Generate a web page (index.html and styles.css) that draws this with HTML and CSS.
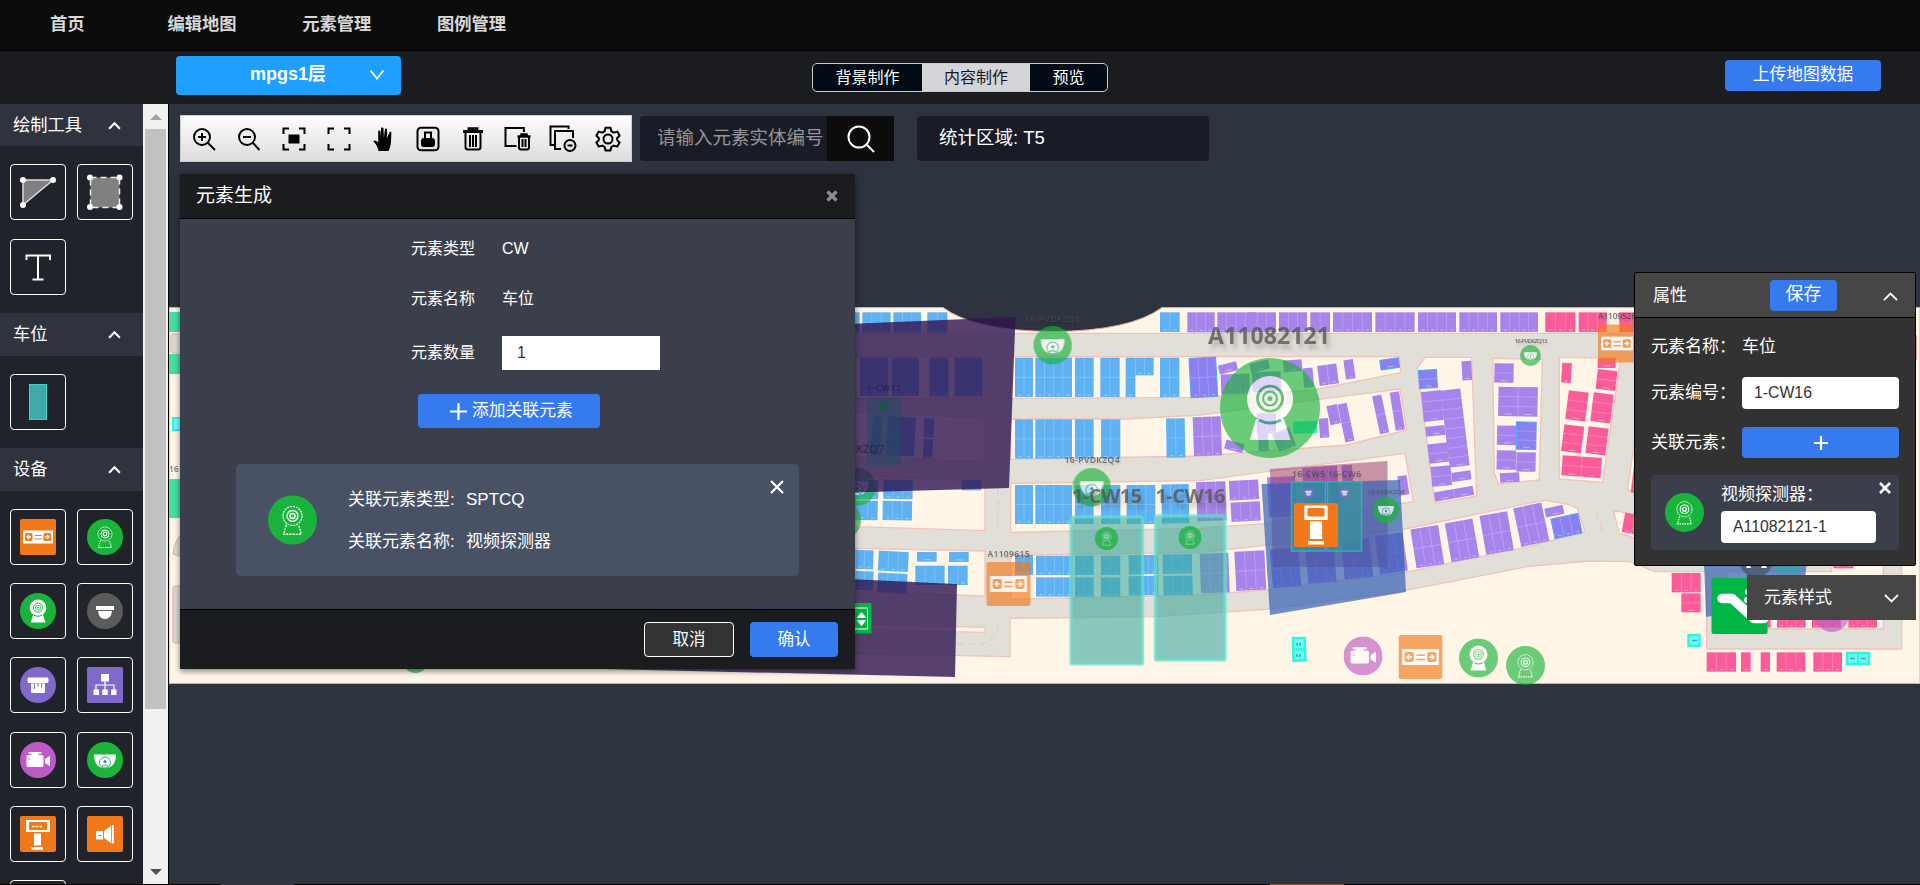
FILE: index.html
```html
<!DOCTYPE html>
<html lang="zh-CN">
<head>
<meta charset="utf-8">
<title>编辑地图</title>
<link rel="stylesheet" href="styles.css">
</head>
<body>
<svg class="defs" width="0" height="0">
  <defs>
    <symbol id="guide" viewBox="0 0 36 36"><rect width="36" height="36" rx="2" fill="#f1791b"/><rect x="3" y="11.500" width="30" height="13" fill="#fff"/><rect x="5" y="14" width="7.500" height="8" rx="1.500" fill="#f1791b"/><rect x="23.500" y="14" width="7.500" height="8" rx="1.500" fill="#f1791b"/><path d="M14.700 16.500h7M14.700 20h7" stroke="#f1791b" stroke-width="1.200"/><path d="M11 18H7m2-2-2 2 2 2M25 18h4m-2-2 2 2-2 2" fill="none" stroke="#fff" stroke-width="1.300"/></symbol>
    <symbol id="probe" viewBox="0 0 36 36"><circle cx="18" cy="18" r="18" fill="#1ab43c"/><g fill="none" stroke="#fff"><circle cx="18" cy="15" r="7" stroke-dasharray="1.500 .7" stroke-width=".9"/><circle cx="18" cy="15" r="4"/><circle cx="18" cy="15" r="1.800" stroke-width="1.200"/><path d="M13.500 21.500l-2 7h13l-2-7" stroke-dasharray="1.500 .8" stroke-width="1"/></g></symbol>
    <symbol id="cam" viewBox="0 0 36 36"><circle cx="18" cy="18" r="18" fill="#1ab43c"/><circle cx="18" cy="14.800" r="8.300" fill="#fff"/><path d="M13 22h10l2.400 7.500H10.700z" fill="#fff"/><g fill="none" stroke="#1ab43c"><circle cx="18" cy="14.600" r="4.500"/><circle cx="18" cy="14.600" r="2.500" stroke-width=".8"/><path d="M14 22.300q4 2.200 8 0" stroke="#16a085"/></g><circle cx="18" cy="14.600" r=".9" fill="#1ab43c"/></symbol>
    <symbol id="dome" viewBox="0 0 36 36"><circle cx="18" cy="18" r="18" fill="#5b5b5b"/><path d="M9 13h18v4H9zM11 18h14q-1 8-7 8t-7-8z" fill="#fff"/></symbol>
    <symbol id="sensor" viewBox="0 0 36 36"><circle cx="18" cy="18" r="18" fill="#8069c9"/><path d="M8 10.500h20q1.500 2.500 0 5.500H8q-1.500-3 0-5.500zM11 16.500h14v8q0 1.500-1.500 1.500h-11q-1.500 0-1.500-1.500z" fill="#fff"/><path d="M14.500 17v5M18 17v3M21.500 17v3.500" stroke="#8069c9"/></symbol>
    <symbol id="net" viewBox="0 0 36 36"><rect width="36" height="36" rx="1.500" fill="#8069c9"/><path d="M14 7h8v7.500h-8zM6.500 22.500h5.500v5.500H6.500zM15.300 22.500h5.500v5.500h-5.500zM24 22.500h5.500v5.500H24z" fill="#fff"/><path d="M18 14v9M9 23v-5h18v5" fill="none" stroke="#fff" stroke-width="1.200"/></symbol>
    <symbol id="video" viewBox="0 0 36 36"><circle cx="18" cy="18" r="18" fill="#bd5bc5"/><path d="M8.500 10h13v1.700h-3V13H22q1.500 0 1.500 1.500v9q0 1.500-1.500 1.500H8q-1.500 0-1.500-1.500v-9Q6.500 13 8 13h3.500v-1.300h-3zM25 17l5-3.200v10.500L25 21z" fill="#fff"/><path d="M8.500 17h2" stroke="#bd5bc5"/></symbol>
    <symbol id="face" viewBox="0 0 36 36"><circle cx="18" cy="18" r="18" fill="#1ab43c"/><path d="M7 12.500h22q0 13-11 13.700Q7 25.500 7 12.500z" fill="#fff"/><circle cx="18" cy="20.500" r="5.500" fill="none" stroke="#22b573"/><circle cx="18" cy="19.500" r="1.600" fill="#22a07a"/><path d="M14 25q4-4 8 0" fill="none" stroke="#22b573"/></symbol>
    <symbol id="kiosk" viewBox="0 0 36 36"><rect width="36" height="36" rx="2" fill="#f1791b"/><path d="M6 4h24v12H6zM14 17.500h7v12h-7zM11.500 31H23v2.800H11.500z" fill="#fff"/><rect x="9" y="6" width="18" height="8" rx="1" fill="#f1791b"/><path d="M12 10.500h2.500m1.200 0h2.500m1.200 0H22" stroke="#fff" stroke-width="1.300"/></symbol>
    <symbol id="totem" viewBox="0 0 36 36"><rect width="36" height="36" rx="1.500" fill="#f1791b"/><rect x="8.500" y="2" width="19" height="12" rx="1" fill="#fff"/><rect x="11" y="4" width="14" height="7" rx="1" fill="#f1791b"/><path d="M13 15h10v14.500H13zM11.500 31h13v3h-13z" fill="#fff"/></symbol>
    <symbol id="horn" viewBox="0 0 36 36"><rect width="36" height="36" rx="2" fill="#f1791b"/><path d="M9 15h7v8.500H9zM17 15l7-5v17l-7-5zM24.800 9h2v18.500h-2z" fill="#fff"/><path d="M11 19.500h3" stroke="#f1791b"/></symbol>
  </defs>
</svg>
<div class="app">
  <nav class="nav"><a>首页</a><a>编辑地图</a><a>元素管理</a><a>图例管理</a></nav>
  <header class="bar">
    <button class="floor"><span>mpgs1层</span><svg width="16" height="12" viewBox="0 0 16 12"><path d="M1.500 1.500 8 9.500l6.500-8"/></svg></button>
    <div class="tabs"><span>背景制作</span><span class="active">内容制作</span><span>预览</span></div>
    <button class="upload">上传地图数据</button>
  </header>
  <main class="main">
    <aside class="side">
      <h3>绘制工具<svg class="caret" viewBox="0 0 12 8"><path d="M1 7 6 2l5 5"/></svg></h3>
      <div class="tools draw">
        <i><svg width="36" height="36"><path d="M3 6h30L3 31z" fill="#808080" stroke="#ddd" stroke-width="1.500"/><g fill="#fff"><circle cx="3" cy="6" r="3"/><circle cx="33" cy="6" r="3"/><circle cx="3" cy="31" r="3"/></g></svg></i>
        <i><svg width="36" height="36"><rect x="3.500" y="3.500" width="29" height="30" fill="#808080" stroke="#eee" stroke-width="1.500" stroke-dasharray="6 4"/><g fill="#fff"><circle cx="3" cy="3.500" r="3"/><circle cx="32.500" cy="3.500" r="3"/><circle cx="3" cy="33" r="3"/><circle cx="32.500" cy="33" r="3"/></g></svg></i>
        <i><svg width="36" height="36"><path d="M6.500 11V6.500h23.500V11M18 6.500v24M12.500 30.500h11" fill="none" stroke="#fff" stroke-width="2"/></svg></i>
      </div>
      <h3>车位<svg class="caret" viewBox="0 0 12 8"><path d="M1 7 6 2l5 5"/></svg></h3>
      <div class="tools"><i><b class="stall"></b></i></div>
      <h3>设备<svg class="caret" viewBox="0 0 12 8"><path d="M1 7 6 2l5 5"/></svg></h3>
      <div class="tools">
        <i><svg width="36" height="36"><use href="#guide"/></svg></i><i><svg width="36" height="36"><use href="#probe"/></svg></i>
        <i><svg width="36" height="36"><use href="#cam"/></svg></i><i><svg width="36" height="36"><use href="#dome"/></svg></i>
        <i><svg width="36" height="36"><use href="#sensor"/></svg></i><i><svg width="36" height="36"><use href="#net"/></svg></i>
        <i><svg width="36" height="36"><use href="#video"/></svg></i><i><svg width="36" height="36"><use href="#face"/></svg></i>
        <i><svg width="36" height="36"><use href="#kiosk"/></svg></i><i><svg width="36" height="36"><use href="#horn"/></svg></i>
        <i></i>
      </div>
    </aside>
    <div class="scroll"><b class="up"></b><b class="thumb"></b><b class="down"></b></div>
    <section class="stage">
      <svg class="map" id="map" viewBox="169 104 1751 780" width="1751" height="780">
        <path d="M169 307.500H943Q975 331 1053 331.500Q1130 331 1162 307.500H1920V683.500H169z" fill="#fff6e8" stroke="#d9a8a2"/>
        <g transform="translate(840 290) scale(.33333)" fill="#fff6e8" stroke="#f2c2ba" stroke-width="4" stroke-linejoin="round">
          <path fill="#e2dfd8" d="M45 130H3185V1077H2600V845H2445L2370 815 2250 813 2060 830 1680 905 1280 958 950 980 510 985V1100L-100 1088-100 130z"/>
          <path d="M45 200H437V325H45zM45 365 437 385V515L45 503zM45 555 435 575V722L45 710zM45 775 435 783V918L45 905zM45 1003 435 1012V1027L45 1018z"/>
          <path d="M512 200H1678L1682 248 1420 300 1080 322 512 325zM512 387 860 387 1080 375 1460 325 1680 297 1700 420 1520 465 1080 498 512 508zM512 580 1080 572 1280 545 1695 490 1720 635 1280 700 1080 715 512 727zM512 795 1080 788 1680 720 2115 630 2180 642 2212 655 2235 725 2065 770 1680 850 1280 900 1080 915 512 928z"/>
          <path d="M1732 235 1755 202H1895L1910 618 1786 640zM1958 205 2107 208 2098 570 1975 582 1963 550zM2158 202 2342 205 2288 577 2158 567zM2385 450 2362 600 2400 610V450zM2320 660 2400 680V750L2338 730z"/>
          <path fill="none" stroke-dasharray="22 12" stroke-width="3" d="M474 390V725M45 1048 400 1062Q474 1063 474 1005M2268 670 2288 730"/>
          <path d="M2660 845H2975V800H3130V1017H2660z"/>
          <path d="M3228 135v75" fill="none" stroke-width="6" stroke="#f4a09a"/>
        </g>
        <g id="stalls" transform="translate(840 290) scale(.33333)"></g>
        <g>
          <rect x="169" y="312" width="12" height="20" fill="#43dfa5"/><rect x="171" y="334" width="12" height="19" rx="2" fill="#dcd8d2" stroke="#e9aaa3"/><rect x="169" y="354" width="12" height="20" fill="#43dfa5"/><rect x="173" y="418" width="10" height="12" fill="#6ff" stroke="#2ff5df" stroke-width="2"/><rect x="169" y="479" width="12" height="39" fill="#43dfa5"/><rect x="173" y="586" width="12" height="57" rx="2" fill="#dcd8d2" stroke="#e9aaa3"/><path d="M184 532q-10 8-11 22l11 4" fill="#dcd8d2" stroke="#e9aaa3"/><circle cx="415.500" cy="660" r="13" fill="#1ab43c" opacity=".65"/>
          <text x="169" y="472" class="tag">16</text>
        </g>
        <g opacity=".65"><use href="#face" x="838" y="462" width="38" height="50"/><circle cx="841" cy="520" r="20" fill="#1ab43c"/></g>
        <path d="M800 326 1015.500 317 1009 488 800 494z" fill="#2f1450" opacity=".8"/>
        <path d="M760 575 957 584 955 677 560 668z" fill="#2f1450" opacity=".8"/>
        <rect x="867" y="397" width="34" height="68" fill="#274766" opacity=".6"/><circle cx="884" cy="406" r="5" fill="#1b5350"/>
        <text x="884" y="391" class="tag dim" text-anchor="middle" textLength="34">1-CW12</text><text x="856" y="453" class="tag dim kz">KZQ7</text>
        <path d="M824 603h47.500v30.500H824z" fill="#00b646"/><path d="M838 608h29.500v21H838M861.500 612.500l4 5h-8zM861.500 625.500l4-5h-8z" fill="none" stroke="#fff"/><path d="M861.500 612.500l4 5h-8zM861.500 625.500l4-5h-8z" fill="#fff"/>
        <g opacity=".65">
          <use href="#face" x="1033.500" y="326" width="38.500" height="38.500"/><use href="#face" x="1072.500" y="468" width="38.500" height="38.500"/>
          <use href="#face" x="1520" y="345" width="21" height="21"/>
          <use href="#cam" x="1220" y="358" width="100" height="100"/>
          <use href="#guide" x="986.500" y="562" width="44" height="44"/><use href="#guide" x="1598" y="324" width="38" height="39"/>
          <use href="#video" x="1343.500" y="636.500" width="39" height="39"/><use href="#guide" x="1398.500" y="635" width="44" height="44"/>
          <use href="#cam" x="1459" y="638.500" width="39" height="39"/><use href="#probe" x="1506" y="646" width="39" height="39"/>
          <circle cx="1832" cy="615" r="17" fill="#bd5bc5"/>
        </g>
        <path d="M1270 469 1387.500 461V567H1273z" fill="#9a3a6a" opacity=".52"/>
        <path d="M1261.500 484 1400 480 1406 592 1270 615z" fill="#355fb5" opacity=".7"/>
        <g fill="#2f9c98" fill-opacity=".6" stroke="#31aeb9" stroke-width="1.500"><rect x="1291.500" y="482" width="34" height="69"/><rect x="1327.500" y="482" width="34" height="69"/></g>
        <g opacity=".75"><use href="#sensor" x="1303" y="487.500" width="11" height="11"/><use href="#sensor" x="1339" y="487.500" width="11" height="11"/><use href="#face" x="1373" y="497" width="26" height="26"/></g>
        <use href="#totem" x="1294" y="503" width="44" height="44"/>
        <g fill="#3fa89c" fill-opacity=".6" stroke="#67e0d0" stroke-opacity=".7" stroke-width="3.500"><rect x="1071" y="517" width="71.500" height="147" rx="1.500"/><rect x="1155.500" y="516" width="69.500" height="144" rx="1.500"/></g>
        <g opacity=".75"><use href="#probe" x="1095" y="527" width="23" height="23"/><use href="#probe" x="1178.500" y="526" width="23" height="23"/></g>
        <g fill="#70fff2" stroke="#2ff5df" stroke-width="2.500"><path d="M1293 638h11.500l1 22-12 1zM1293 649.500h12"/><rect x="1688.500" y="635" width="11" height="11"/><rect x="1847" y="653" width="22" height="11"/></g><path d="M1858 653v11" stroke="#2ff5df" stroke-width="2"/>
        <path d="M1297 643v3M1300 643v3M1297 654v3M1300 654v3M1692 640.500h5M1850 658.500h5M1861 658.500h5" stroke="#3aa" stroke-width="1.500"/>
        <path d="M1704 562H1807L1802 600 1706 617z" fill="#355fb5" opacity=".7"/><circle cx="1756" cy="560" r="17" fill="#50617b"/><path d="M1746 568l3-5 2 5zM1761 568l3-5 3 5z" fill="#fff"/><rect x="1776" y="555" width="24" height="19" fill="#439bb2"/>
        <rect x="1711.500" y="578" width="56" height="56" rx="2" fill="#00b646"/><path d="M1722 598.500h10l22 20h10" fill="none" stroke="#fff" stroke-width="9.500" stroke-linecap="round" stroke-linejoin="round"/><circle cx="1748" cy="592" r="3" fill="#fff"/><circle cx="1747" cy="600" r="3" fill="#fff"/>
        <g class="label"><text x="1208" y="344" textLength="122" class="big">A11082121</text><text x="1072" y="503" textLength="70">1-CW15</text><text x="1155.500" y="503" textLength="70">1-CW16</text></g>
        <g class="tag" text-anchor="middle"><text x="1052.500" y="321.500" textLength="55">16-PVDKZQ8</text><text x="1092" y="463" textLength="55">16-PVDKZQ4</text><text x="1008.500" y="557" textLength="42">A1109615</text><text x="1326.500" y="477" textLength="69">16-CW5 16-CW6</text><text x="1386" y="494" textLength="38" class="tiny">16-PVDKZQ9</text><text x="1531" y="343" textLength="33" class="tiny">16-PVDKZQ13</text><text x="1617" y="319" textLength="38">A1109528</text></g>
      </svg>

      <div class="overlay">
        <div class="toprow">
          <div class="toolbar">
            <svg viewBox="0 0 24 24"><circle cx="10" cy="10" r="8"/><path d="M16 16l7 7M10 6v8M6 10h8"/></svg>
            <svg viewBox="0 0 24 24"><circle cx="10" cy="10" r="8"/><path d="M16 16l6.500 7M6 10h8"/></svg>
            <svg viewBox="0 0 24 24"><path d="M1.500 7V1.500H7M17 1.500h5.500V7M22.500 17v5.500H17M7 22.500H1.500V17"/><path d="M7.500 8.500h9v7h-9z" fill="#000"/></svg>
            <svg viewBox="0 0 24 24"><path d="M1.500 7V1.500H7M17 1.500h5.500V7M22.500 17v5.500H17M7 22.500H1.500V17"/></svg>
            <svg viewBox="0 0 24 24"><path d="M6.500 24C6 20 4 17 1.500 14.500c.5-1.800 2.500-1 4.700 1V4.500c0-1.500 2-1.500 2.200 0l.6 6V1.600c0-1.600 2.400-1.600 2.500 0l.4 8.900 1-8c.2-1.500 2.300-1.300 2.200.2L15 11l2.300-5.500c.6-1.300 2.500-.8 2.200.7C18.700 11 20 18 16.500 24z" fill="#000" stroke="none"/></svg>
            <svg viewBox="0 0 24 24"><rect x="1.500" y=".8" width="21" height="22.500" rx="3.500"/><rect x="6" y="12" width="12" height="7" rx="2" fill="#000"/><path d="M9 12V5.500h6V12"/></svg>
            <svg viewBox="0 0 24 24"><path d="M2 4.500h20M8 4V1.800h8V4" stroke-width="3"/><path d="M4.500 6v14q0 2.500 2.500 2.500h10q2.500 0 2.500-2.500V6M9 8v12M12 8v12M15 8v12"/></svg>
            <svg viewBox="0 0 24 24"><path d="M10.500 19H-.5V.9h18.400V5"/><path d="M11.500 9.500h13M15.500 9V7.500h5V9" stroke-width="2.500"/><path d="M13 10v10.500q0 2 2 2h6q2 0 2-2V10M16.500 12v8M19.500 12v8" stroke-width="2"/></svg>
            <svg viewBox="0 0 24 24"><path d="M3 18H-.5V-.5h18V2"/><path d="M10 22H4V4h18v7"/><circle cx="19" cy="18.500" r="5.500"/><path d="M16.500 18.500h5"/></svg>
            <svg viewBox="0 0 24 24"><path d="M9.500.8h5l.8 3.400 2.500 1.400 3.500-1 2.300 4.200-2.400 2.200v2.200l2.400 2.200-2.300 4.200-3.500-1-2.500 1.400-.8 3.400h-5l-.8-3.400-2.500-1.400-3.500 1L.4 15.400l2.400-2.200V11L.4 8.800l2.300-4.200 3.500 1 2.500-1.400z" stroke-linejoin="round"/><circle cx="12" cy="12" r="4.500"/></svg>
          </div>
          <div class="search"><span>请输入元素实体编号</span><button><svg width="28" height="28" viewBox="0 0 28 28"><circle cx="12" cy="12" r="10.500"/><path d="M20 20l7 7"/></svg></button></div>
          <div class="stat">统计区域: T5</div>
        </div>

        <div class="modal">
          <div class="modal-head">元素生成<svg width="12" height="12" viewBox="0 0 12 12"><path d="M1.500 1.500l9 9M10.500 1.500l-9 9"/></svg></div>
          <div class="modal-body">
            <div class="row"><label>元素类型</label><span>CW</span></div>
            <div class="row"><label>元素名称</label><span>车位</span></div>
            <div class="row tall"><label>元素数量</label><span class="num">1</span></div>
            <button class="add"><svg width="17" height="17"><path d="M8.500 0v17M0 8.500h17"/></svg>添加关联元素</button>
            <div class="card"><svg width="49" height="50"><use href="#probe"/></svg>
              <dl><dt>关联元素类型:</dt><dd>SPTCQ</dd><dt>关联元素名称:</dt><dd>视频探测器</dd></dl>
              <svg class="close" width="14" height="14"><path d="M1 1l12 12M13 1L1 13"/></svg></div>
          </div>
          <div class="modal-foot"><button class="cancel">取消</button><button class="ok">确认</button></div>
        </div>
      </div>

      <div class="props">
        <div class="panel">
          <div class="panel-head"><span>属性</span><button>保存</button><svg width="15" height="9"><path d="M1 8l6.500-6.500L14 8"/></svg></div>
          <div class="panel-body">
            <div class="prow"><label>元素名称：</label><span>车位</span></div>
            <div class="prow"><label>元素编号：</label><span class="field">1-CW16</span></div>
            <div class="prow"><label>关联元素：</label><span class="plus"><svg width="14" height="14"><path d="M7 0v14M0 7h14"/></svg></span></div>
            <div class="pcard"><svg class="dev" width="39" height="39"><use href="#probe"/></svg><div><p>视频探测器：</p><span class="field">A11082121-1</span></div><svg class="x" width="12" height="12"><path d="M1 1l10 10M11 1L1 11"/></svg></div>
          </div>
        </div>
        <div class="style">元素样式<svg width="15" height="9"><path d="M1 1l6.500 6.500L14 1"/></svg></div>
      </div>
    </section>
  </main>
  <footer class="edge"><b></b><b class="warm"></b></footer>
</div>
<script src="app.js"></script>
</body>
</html>
```
FILE: styles.css
```css
* { box-sizing: border-box; }
body { margin: 0; background: #2d333f; color: #fff; font: 17px/1.2 "Liberation Sans", "Noto Sans CJK SC", sans-serif; }
button { border: 0; padding: 0; color: #fff; font: inherit; background: #367af0; border-radius: 4px; }
.defs { position: absolute; }
.app { display: flex; flex-direction: column; width: 1920px; height: 885px; overflow: hidden; }
.nav { height: 51px; flex: none; background: #0c0c0c; border-bottom: 1px solid #000; display: flex; align-items: center; padding: 0 0 1px 50px; color: #d8d8d8; font-weight: bold; font-size: 17.300px; }
.nav a { margin-right: 65.600px; }
.nav a:first-child { margin-right: 82.900px; }
.bar { height: 53px; flex: none; background: #1b1c20; display: flex; padding-left: 176px; }
.floor { width: 225px; height: 39px; margin-top: 5px; background: #1f9fff; font-weight: bold; font-size: 18px; display: flex; align-items: center; padding-left: 74px; }
.floor span { width: 119px; text-align: left; padding-bottom: 1px; }
.floor svg { margin-bottom: 2px; }
.floor path { fill: none; stroke: #fff; stroke-width: 1.800; }
.tabs { width: 296px; height: 29px; margin: 12px 0 0 411px; border: 1px solid #c8cbd0; border-radius: 5px; display: flex; background: #020b16; font-size: 16px; line-height: 27px; text-align: center; overflow: hidden; }
.tabs span { flex: 0 0 108px; }
.tabs span:first-child { flex-basis: 109px; }
.tabs span:last-child { flex: 1; }
.tabs .active { background: #d4d5da; color: #16181d; }
.upload { width: 156px; height: 31px; margin: 9px 0 0 617px; font-size: 16.800px; }
.main { display: flex; flex: 1; min-height: 0; }
.side { width: 143px; background: #21232b; overflow: hidden; flex: none; }
.side h3 { margin: 0; height: 43px; background: #2f333e; font-weight: normal; font-size: 17.300px; display: flex; align-items: center; justify-content: space-between; padding: 0 22px 0 13px; }
.side h3:first-child { height: 42px; }
.caret { width: 13px; height: 9px; fill: none; stroke: #fff; stroke-width: 2; }
.tools { display: grid; grid-template-columns: 56px 56px; grid-auto-rows: 56px; gap: 18.200px 11px; padding: 18px 10px; }
.tools.draw { row-gap: 19px; }
.tools i { border: 1px solid #fff; border-radius: 4px; display: flex; align-items: center; justify-content: center; }
.stall { width: 18px; height: 36px; background: #40aaa8; border: 1px solid #3fd3c8; }
.scroll { width: 26px; flex: none; background: #f1f1f1; border-right: 1px solid #000; display: flex; flex-direction: column; align-items: center; }
.up { border: 6px solid transparent; border-top: 0; border-bottom-color: #a2a2a2; margin: 10px 0 9px; }
.thumb { width: 21px; height: 580px; background: #c1c1c1; }
.down { border: 6px solid transparent; border-bottom: 0; border-top-color: #505050; margin-top: 160px; }
.stage { position: relative; flex: 1; background: #2d333f; }
.map { display: block; }
.label text { font: bold 20px "Open Sans", sans-serif; fill: #555; fill-opacity: .78; filter: drop-shadow(3px 5px 2px rgba(0,0,0,.25)); }
.label .big { font-size: 23px; }
.tag { font: 600 8.500px "Open Sans", sans-serif; fill: #4a4a4a; fill-opacity: .75; }
.tag text { filter: drop-shadow(1px 2px 1px rgba(0,0,0,.2)); }
.tag.dim { fill: #281232; fill-opacity: .6; }
.tag.kz { font-size: 11px; }
.tag .tiny { font-size: 6px; }
.overlay { position: absolute; left: 11px; top: 11px; }
.toprow { display: flex; }
.toolbar { width: 452px; height: 47px; border: 1px solid #ccc; background: linear-gradient(#fdfdfd, #ddd); display: flex; align-items: center; justify-content: space-between; padding: 0 11px; }
.toolbar svg { width: 24px; height: 24px; overflow: visible; fill: none; stroke: #000; stroke-width: 2; }
.search { margin: 1px 0 0 8px; width: 254px; height: 45px; background: #191c26; border-radius: 4px; display: flex; align-items: center; color: #969696; font-size: 18.500px; }
.search span { width: 187px; padding-left: 17px; white-space: nowrap; }
.search button { width: 67px; height: 45px; border-radius: 0; background: #0c0c0c; display: grid; place-items: center; }
.search svg { fill: none; stroke: #fff; stroke-width: 2; }
.stat { margin: 1px 0 0 23px; width: 292px; height: 45px; background: #191c26; border-radius: 4px; padding-left: 22px; font-size: 18.500px; line-height: 44px; }
.modal { width: 675px; height: 495px; margin-top: 12px; box-shadow: 0 2px 6px rgba(0,0,0,.5); display: flex; flex-direction: column; }
.modal-head { height: 45px; background: #1b1c20; border-bottom: 1px solid #000; display: flex; align-items: center; justify-content: space-between; padding: 0 17px 0 16px; font-size: 19px; }
.modal-head path { stroke: #8b8b8b; stroke-width: 3.500; }
.modal-body { flex: 1; background: #3b3f4c; display: flex; flex-direction: column; font-size: 16px; }
.row { display: flex; align-items: center; height: 50px; margin-left: 231px; }
.row:first-child { margin-top: 5px; }
.row label { width: 91px; }
.row.tall { height: 58px; }
.num { width: 158px; height: 34px; background: #fff; color: #333; padding-left: 15px; line-height: 33px; }
.add { width: 182px; height: 34px; margin: 12px 0 0 238px; font-size: 16.800px; display: flex; align-items: center; padding-left: 32px; gap: 5px; flex: none; }
.add path, .plus path { stroke: #fff; stroke-width: 2.200; }
.card { width: 563px; height: 112px; margin: 36px 0 0 56px; background: #495165; border-radius: 5px; display: flex; padding: 0 15px 0 32px; align-items: center; font-size: 17px; flex: none; }
.card dl { margin: 2px 0 0 31px; display: grid; grid-template-columns: 118px 304px; row-gap: 22px; line-height: 20px; }
.card dd { margin: 0; }
.card .close { align-self: flex-start; margin-top: 16px; }
.close path, .x path { stroke: #fff; stroke-width: 2.200; }
.modal-foot { height: 60px; background: #1b1c20; border-top: 1px solid #000; display: flex; justify-content: flex-end; gap: 16px; padding: 12px 17px 0 0; font-size: 16.500px; }
.modal-foot button { width: 88px; height: 35px; }
.modal-foot .cancel { width: 90px; background: #333; border: 1px solid #fff; }
.props { position: absolute; right: 4px; top: 168px; display: flex; flex-direction: column; align-items: flex-end; }
.panel { width: 282px; height: 294px; background: #323232; border: 1px solid #000; border-radius: 2px; }
.panel-head { height: 45px; background: #464646; border-bottom: 1px solid #000; display: flex; align-items: center; padding-left: 18px; }
.panel-head span { width: 117px; padding-top: 2px; }
.panel-head button { width: 67px; height: 31px; font-size: 18px; margin-right: 46px; }
.props svg:not(.dev) { fill: none; stroke: #fff; stroke-width: 1.800; }
.panel-head svg { margin-top: 3px; }
.prow { display: flex; align-items: center; height: 50px; padding-left: 16px; }
.prow:first-child { margin: 4px 0 -4px; }
.prow label { width: 91px; }
.field { display: block; width: 157px; height: 32px; background: #fff; color: #333; border-radius: 4px; padding-left: 12px; font-size: 15.800px; line-height: 31px; }
.plus { width: 157px; height: 31px; background: #367af0; border-radius: 4px; display: grid; place-items: center; margin-top: -1px; }
.pcard { width: 248px; height: 75px; margin: 7px 0 0 16px; background: #3b3f4c; border-radius: 4px; display: flex; padding: 7px 8px 0 14px; }
.pcard .dev { margin: 11px 17px 0 0; flex: none; }
.pcard p { margin: 0; height: 29px; line-height: 26px; white-space: nowrap; }
.pcard .field { width: 155px; }
.pcard .x { margin-left: 3px; }
.props .x path { stroke-width: 2.600; }
.style { width: 169px; height: 45px; margin-top: 9px; background: #464646; display: flex; align-items: center; justify-content: space-between; padding: 1px 17px 0; }
.edge { height: 1px; flex: none; background: #000; display: flex; padding-left: 221px; }
.edge b { width: 73px; background: #3b3540; }
.edge .warm { margin-left: 976px; width: 74px; background: #8a5a2c; }
```
FILE: app.js
```js
// Parking blocks: x, y, width, height, columns, rows, rotation, colour key
const B = '#5eb1f3', P = '#a684ec', V = '#8a80ef', K = '#f95c98';
const blocks = [
  [20,67,39,60,1,1,0,B],[67,67,85,60,3,1,0,B],[160,67,83,60,3,1,0,B],[262,67,60,60,2,1,0,B],
  [60,203,85,115,3,2,0,B],[155,203,82,115,3,2,0,B],[268,203,58,117,2,1,0,B],[344,203,84,117,3,1,0,B],
  [95,378,28,118,1,2,5,B],[140,380,85,117,3,2,3,B],[252,385,30,58,1,1,2,B],[250,447,28,58,1,1,2,B],
  [20,569,95,58,3,1,1,B],[20,632,93,58,3,1,1,B],[130,569,88,58,3,1,1,B],[128,633,88,58,3,1,1,B],[365,570,59,31,2,1,0,B],
  [20,780,80,57,3,1,2,B],[20,843,80,57,3,1,2,B],[115,784,90,60,3,1,3,B],[113,850,88,58,3,1,3,B],[231,786,59,29,1,1,0,B],[327,786,59,30,1,1,0,B],[226,827,88,58,3,1,0,B],[324,827,59,58,2,1,0,B],
  [960,67,59,59,2,1,0,B],[1042,67,82,60,3,1,0,P],[1132,67,112,60,4,1,0,P],
  [525,203,54,118,2,2,0,B],[586,203,110,118,4,2,0,B],[705,203,56,118,2,2,0,B],[781,203,58,118,2,2,0,B],[857,203,29,118,1,2,0,B],[886,203,55,53,2,1,0,B],[960,203,58,118,2,2,0,B],[1050,203,80,118,3,2,-3,V],
  [525,388,54,118,2,2,0,B],[586,388,110,118,4,2,0,B],[705,388,56,118,2,2,0,B],[783,388,58,118,2,2,0,B],[979,385,56,118,2,2,-1,B],[1060,380,84,117,3,2,-2,P],
  [525,585,54,117,2,2,0,B],[586,585,110,117,4,2,0,B],[705,585,56,117,2,2,0,B],[783,585,58,117,2,2,0,B],[860,585,86,117,3,2,0,B],[965,583,82,117,3,2,-1,B],[1070,575,88,117,3,2,-2,P],
  [525,795,54,60,2,1,0,B],[588,797,110,58,4,1,0,B],[588,862,110,58,4,1,0,B],[705,797,56,58,2,1,0,B],[705,862,56,58,2,1,0,B],[783,797,58,58,2,1,0,B],[783,862,58,58,2,1,0,B],[866,795,88,58,3,1,-1,B],[866,858,88,58,3,1,-1,B],[968,793,88,58,3,1,-1,B],[970,857,88,58,3,1,-1,B],[1081,790,86,118,3,2,-2,P],
  [1224,67,84,59,3,1,0,P],[1317,67,84,59,3,1,0,P],[1411,67,59,59,2,1,0,P],[1479,67,117,59,4,1,0,P],[1606,67,118,59,4,1,0,P],[1734,67,114,59,4,1,0,P],[1858,67,113,59,4,1,0,P],[1981,67,113,59,4,1,0,P],[2116,67,90,59,3,1,0,K],[2216,67,84,59,3,1,0,K],[2338,67,70,59,2,1,0,K],
  [1136,220,56,27,1,1,-14,P],[1143,252,86,60,3,1,-2,P],[1230,215,58,28,1,1,-15,P],[1237,245,86,60,3,1,-3,P],[1330,210,56,35,1,1,-5,P],[1390,234,30,58,1,1,-5,P],[1435,224,58,60,2,1,-8,P],[1514,209,29,58,1,1,-8,P],[1621,207,56,29,1,1,-8,V],
  [1155,455,56,28,1,1,15,P],[1250,370,58,60,2,1,0,P],[1255,425,30,58,1,1,-4,P],[1305,420,55,58,2,1,-22,P],[1438,385,28,58,1,1,-4,P],[1465,345,32,58,1,1,-12,P],[1504,340,28,116,1,2,-12,P],[1608,315,28,116,1,2,-12,P],[1658,305,28,116,1,2,-9,P],
  [1168,571,88,58,3,1,-3,P],[1173,636,88,58,3,1,-3,P],[1284,560,84,120,3,2,-3,P],[1390,530,105,120,4,2,-4,P],[1506,525,32,58,1,1,-4,P],[1676,557,28,58,1,1,-9,P],
  [1186,783,90,118,3,2,-3,P],[1294,775,85,116,3,2,-5,P],[1400,762,85,116,3,2,-5,P],[1508,748,86,116,3,2,-6,P],[1612,732,84,116,3,2,-8,P],[1720,711,84,118,3,2,-9,P],[1824,692,84,118,3,2,-10,P],[1928,670,84,118,3,2,-10,P],[2031,645,86,118,3,2,-12,P],[2115,650,56,27,1,1,-12,P],[2138,678,83,60,3,1,-12,V],
  [1737,240,54,54,1,2,-3,V],[1866,213,29,58,1,1,-3,P],[1747,303,60,90,1,3,-6,P],[1757,408,58,29,1,1,-6,P],[1765,460,60,58,1,2,-6,P],[1774,528,60,60,1,2,-5,P],[1815,298,60,232,1,8,-7,P],[1835,545,58,27,1,1,-8,P],[1783,597,118,28,2,1,-10,P],
  [1963,220,58,58,1,2,1,P],[1975,291,118,88,2,3,1,P],[1971,407,58,58,1,2,1,P],[2029,396,59,82,1,3,1,V],[1970,481,58,58,1,2,1,P],[2029,487,58,58,1,2,1,P],[1980,548,58,29,1,1,-3,P],
  [2165,219,29,59,1,1,4,K],[2273,205,54,29,1,1,0,K],[2270,240,59,60,1,2,7,K],[2181,304,60,87,1,3,7,K],[2256,310,60,87,1,3,7,K],[2168,406,60,81,1,3,7,K],[2241,412,60,81,1,3,7,K],[2166,500,118,60,2,2,4,K],[2378,510,40,100,1,3,7,K],[2350,672,60,60,2,1,10,K],
  [2495,849,87,58,3,1,0,K],[2524,910,58,57,1,2,0,K],[2600,1087,88,58,3,1,0,K],[2703,1087,29,58,1,1,0,K],[2762,1087,28,58,1,1,0,K],[2810,1087,86,58,3,1,0,K],[2920,1087,86,58,3,1,0,K],[2764,975,28,38,1,1,0,K],[2811,975,86,38,3,1,0,K],[2916,975,86,38,3,1,0,K],[3025,975,86,38,3,1,0,K],[2980,815,60,20,2,1,0,K],[1360,394,72,36,2,1,-2,'#35edc4']
];
document.getElementById('stalls').innerHTML = blocks.map(([x, y, w, h, c, r, a, f]) => {
  let lines = '';
  for (let i = 1; i < c; i++) lines += `M${x + w * i / c} ${y}v${h}`;
  for (let j = 1; j < r; j++) lines += `M${x} ${y + h * j / r}h${w}`;
  let marks = '';
  for (let i = 0; i < c; i++) marks += `M${x + w * (i + .35) / c} ${y + h - 6}h${w / c * .35}`;
  const edge = f === V ? '#4da8f5' : 'none';
  return `<g transform="rotate(${a} ${x + w / 2} ${y + h / 2})"><rect x="${x}" y="${y}" width="${w}" height="${h}" fill="${f}" stroke="${edge}" stroke-width="3"/><path d="${lines}" stroke="#fff" stroke-opacity=".25" stroke-width="2.5"/><path d="${marks}" stroke="#fff" stroke-opacity=".4" stroke-width="3"/></g>`;
}).join('');
```
